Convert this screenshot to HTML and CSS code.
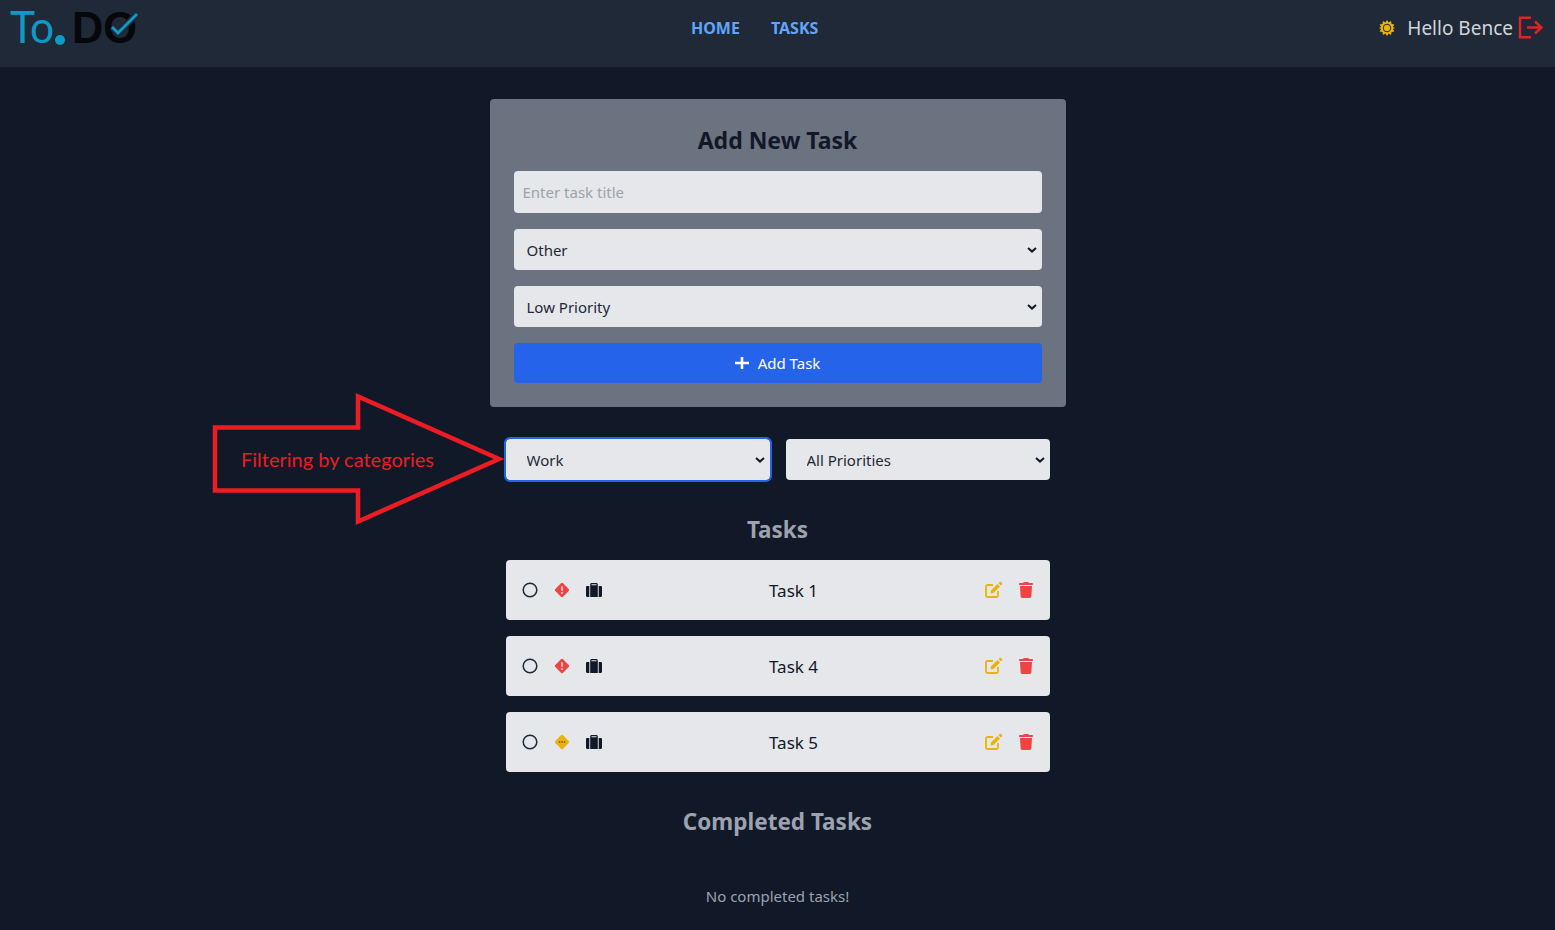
FILE: index.html
```html
<!DOCTYPE html>
<html lang="en">
<head>
    <meta charset="UTF-8">
    <meta name="viewport" content="width=device-width, initial-scale=1.0">
    <title>To.DO</title>
    <link rel="stylesheet" href="styles.css">
</head>
<body>
    <header class="topbar">
        <a class="logo" href="#">
            <svg width="128" height="60" viewBox="0 0 128 60">
                <text class="logo-to" x="0" y="43" textLength="44" lengthAdjust="spacingAndGlyphs">To</text>
                <circle cx="50" cy="40" r="5" fill="#0e9ac7"/>
                <text class="logo-do" x="62" y="43" textLength="65" lengthAdjust="spacingAndGlyphs">DO</text>
                <path d="M102 27l6 6 19-19" fill="none" stroke="#1f2937" stroke-width="6.500"/>
                <path d="M102 27l6 6 19-19" fill="none" stroke="#0e9ac7" stroke-width="3"/>
            </svg>
        </a>
        <nav class="nav">
            <a href="#">HOME</a>
            <a href="#">TASKS</a>
        </nav>
        <div class="user">
            <button class="theme-btn" aria-label="Theme">
                <svg width="16" height="16" viewBox="0 0 16 16" fill="#eab308">
                    <path d="M8 0l1.600 2.600L12 1.100l.6 2.800 2.800.6-1.500 2.400L16 8l-2.100 1.100 1.500 2.400-2.800.6-.6 2.800-2.400-1.500L8 16l-1.600-2.600L4 14.900l-.6-2.800-2.800-.6 1.500-2.400L0 8l2.100-1.100L.6 4.500l2.800-.6L4 1.100l2.400 1.500z"/>
                    <circle cx="8" cy="8" r="3.800" fill="none" stroke="#1f2937" stroke-width="1"/>
                </svg>
            </button>
            <span class="hello">Hello Bence</span>
            <svg class="logout" width="26" height="24" viewBox="0 0 26 24" fill="none" stroke="#dc2626" stroke-width="2.400">
                <path d="M13 1.700H2v19.600h11"/>
                <path d="M9 11.500h15M17 5.500l6.500 6-6.500 6"/>
            </svg>
        </div>
    </header>

    <main class="page">
        <section class="add-card">
            <h2 class="add-title">Add New Task</h2>
            <form class="add-form">
                <input class="field title-input" type="text" placeholder="Enter task title">
                <select class="field pick">
                    <option>Other</option>
                </select>
                <select class="field pick">
                    <option>Low Priority</option>
                </select>
                <button class="add-btn" type="button">
                    <svg width="14" height="16" viewBox="0 0 14 16"><path d="M7 2v12M0 8h14" stroke="#fff" stroke-width="2.600"/></svg>
                    Add Task
                </button>
            </form>
        </section>

        <div class="filters">
            <select class="field filter filter-active">
                <option>Work</option>
            </select>
            <select class="field filter">
                <option>All Priorities</option>
            </select>
        </div>

        <h2 class="section-title">Tasks</h2>
        <ul class="task-list">
            <li class="task">
                <div class="task-icons">
                    <svg class="ico" viewBox="0 0 16 16"><circle cx="8" cy="8" r="6.800" fill="none" stroke="#1f2937" stroke-width="1.500"/></svg>
                    <svg class="ico" viewBox="0 0 16 16"><rect x="2.500" y="2.500" width="11" height="11" rx="1.500" fill="#ef4444" transform="rotate(45 8 8)"/><path d="M8 4.200v4.600" stroke="#e5e7eb" stroke-width="1.500"/><circle cx="8" cy="11" r=".9" fill="#e5e7eb"/></svg>
                    <svg class="ico" viewBox="0 0 16 16"><path d="M3.300 4H1.200C.5 4 0 4.500 0 5.200v8.600C0 14.500.5 15 1.200 15h2.100zM4.200 15h7.600V2.500C11.800 1.700 11.100 1 10.300 1H5.700C4.900 1 4.200 1.700 4.200 2.500zM5.500 2.300h5v1h-5zM12.700 4v11h2.100c.7 0 1.200-.5 1.200-1.200V5.200c0-.7-.5-1.200-1.200-1.200z" fill="#111827" fill-rule="evenodd"/></svg>
                </div>
                <span class="task-name">Task 1</span>
                <div class="task-actions">
                    <svg class="ico edit" viewBox="0 0 18 16"><path d="M9 3H3.500C2.700 3 2 3.700 2 4.500v9c0 .8.700 1.500 1.500 1.500h9c.8 0 1.500-.7 1.500-1.500V9" fill="none" stroke="#eab308" stroke-width="1.800"/><path d="M7 8.500L13.500 2l2.500 2.500L9.500 11 6.500 11.500z" fill="#eab308"/><path d="M14.500 1l1-1c.4-.4 1-.4 1.400 0l1.100 1.100c.4.4.4 1 0 1.400l-1 1z" fill="#eab308"/></svg>
                    <svg class="ico" viewBox="0 0 448 512"><path d="M135.200 17.700L128 32H32C14.300 32 0 46.300 0 64S14.300 96 32 96H416c17.700 0 32-14.300 32-32s-14.300-32-32-32H320l-7.200-14.300C307.400 6.800 296.300 0 284.200 0H163.800c-12.100 0-23.200 6.800-28.600 17.700zM416 128H32L53.200 467c1.600 25.300 22.600 45 47.900 45H346.900c25.300 0 46.300-19.700 47.900-45L416 128z" fill="#ef4444"/></svg>
                </div>
            </li>
            <li class="task">
                <div class="task-icons">
                    <svg class="ico" viewBox="0 0 16 16"><circle cx="8" cy="8" r="6.800" fill="none" stroke="#1f2937" stroke-width="1.500"/></svg>
                    <svg class="ico" viewBox="0 0 16 16"><rect x="2.500" y="2.500" width="11" height="11" rx="1.500" fill="#ef4444" transform="rotate(45 8 8)"/><path d="M8 4.200v4.600" stroke="#e5e7eb" stroke-width="1.500"/><circle cx="8" cy="11" r=".9" fill="#e5e7eb"/></svg>
                    <svg class="ico" viewBox="0 0 16 16"><path d="M3.300 4H1.200C.5 4 0 4.500 0 5.200v8.600C0 14.500.5 15 1.200 15h2.100zM4.200 15h7.600V2.500C11.800 1.700 11.100 1 10.300 1H5.700C4.900 1 4.200 1.700 4.200 2.500zM5.500 2.300h5v1h-5zM12.700 4v11h2.100c.7 0 1.200-.5 1.200-1.200V5.200c0-.7-.5-1.200-1.200-1.200z" fill="#111827" fill-rule="evenodd"/></svg>
                </div>
                <span class="task-name">Task 4</span>
                <div class="task-actions">
                    <svg class="ico edit" viewBox="0 0 18 16"><path d="M9 3H3.500C2.700 3 2 3.700 2 4.500v9c0 .8.700 1.500 1.500 1.500h9c.8 0 1.500-.7 1.500-1.500V9" fill="none" stroke="#eab308" stroke-width="1.800"/><path d="M7 8.500L13.500 2l2.500 2.500L9.500 11 6.500 11.500z" fill="#eab308"/><path d="M14.500 1l1-1c.4-.4 1-.4 1.400 0l1.100 1.100c.4.4.4 1 0 1.400l-1 1z" fill="#eab308"/></svg>
                    <svg class="ico" viewBox="0 0 448 512"><path d="M135.200 17.700L128 32H32C14.300 32 0 46.300 0 64S14.300 96 32 96H416c17.700 0 32-14.300 32-32s-14.300-32-32-32H320l-7.200-14.300C307.400 6.800 296.300 0 284.200 0H163.800c-12.100 0-23.200 6.800-28.600 17.700zM416 128H32L53.200 467c1.600 25.300 22.600 45 47.900 45H346.900c25.300 0 46.300-19.700 47.900-45L416 128z" fill="#ef4444"/></svg>
                </div>
            </li>
            <li class="task">
                <div class="task-icons">
                    <svg class="ico" viewBox="0 0 16 16"><circle cx="8" cy="8" r="6.800" fill="none" stroke="#1f2937" stroke-width="1.500"/></svg>
                    <svg class="ico" viewBox="0 0 16 16"><rect x="2.500" y="2.500" width="11" height="11" rx="1.500" fill="#eab308" transform="rotate(45 8 8)"/><path d="M4.800 8h6.400" stroke="#a16207" stroke-width="2" stroke-dasharray="1.400 1.100"/></svg>
                    <svg class="ico" viewBox="0 0 16 16"><path d="M3.300 4H1.200C.5 4 0 4.500 0 5.200v8.600C0 14.500.5 15 1.200 15h2.100zM4.200 15h7.600V2.500C11.800 1.700 11.100 1 10.300 1H5.700C4.900 1 4.200 1.700 4.200 2.500zM5.500 2.300h5v1h-5zM12.700 4v11h2.100c.7 0 1.200-.5 1.200-1.200V5.200c0-.7-.5-1.200-1.200-1.200z" fill="#111827" fill-rule="evenodd"/></svg>
                </div>
                <span class="task-name">Task 5</span>
                <div class="task-actions">
                    <svg class="ico edit" viewBox="0 0 18 16"><path d="M9 3H3.500C2.700 3 2 3.700 2 4.500v9c0 .8.700 1.500 1.500 1.500h9c.8 0 1.500-.7 1.500-1.500V9" fill="none" stroke="#eab308" stroke-width="1.800"/><path d="M7 8.500L13.500 2l2.500 2.500L9.500 11 6.500 11.500z" fill="#eab308"/><path d="M14.500 1l1-1c.4-.4 1-.4 1.400 0l1.100 1.100c.4.4.4 1 0 1.400l-1 1z" fill="#eab308"/></svg>
                    <svg class="ico" viewBox="0 0 448 512"><path d="M135.200 17.700L128 32H32C14.300 32 0 46.300 0 64S14.300 96 32 96H416c17.700 0 32-14.300 32-32s-14.300-32-32-32H320l-7.200-14.300C307.400 6.800 296.300 0 284.200 0H163.800c-12.100 0-23.200 6.800-28.600 17.700zM416 128H32L53.200 467c1.600 25.300 22.600 45 47.900 45H346.900c25.300 0 46.300-19.700 47.900-45L416 128z" fill="#ef4444"/></svg>
                </div>
            </li>
        </ul>

        <h2 class="section-title completed-title">Completed Tasks</h2>
        <p class="empty">No completed tasks!</p>
    </main>

    <!-- red arrow drawn over the screenshot -->
    <div class="note">
        <svg width="300" height="140" viewBox="0 0 300 140">
            <path d="M3 35.500H146V4.500L287 67 146 129.500V98.500H3Z" fill="none" stroke="#ed1c24" stroke-width="4.500"/>
        </svg>
        <span class="note-text">Filtering by categories</span>
    </div>
</body>
</html>
```

FILE: styles.css
```css
* {
    box-sizing: border-box;
}

body {
    font-family: "Noto Sans", "Open Sans", sans-serif;
    font-size: 15px;
    margin: 0;
    padding: 0;
    background-color: #111827;
    color: #111827;
}

.topbar {
    display: flex;
    justify-content: space-between;
    align-items: center;
    height: 67px;
    padding: 0 11px 12px 10px;
    background-color: #1f2937;
}

.logo {
    display: block;
    align-self: flex-start;
    width: 128px;
    height: 60px;
}

.logo-to {
    font-family: "Lato", sans-serif;
    font-weight: 400;
    font-size: 44px;
    fill: #0e9ac7;
}

.logo-do {
    font-family: "Liberation Sans", sans-serif;
    font-weight: 700;
    font-size: 45px;
    fill: #05070b;
}

.nav {
    display: flex;
    gap: 31px;
}

.nav a {
    color: #60a5fa;
    font-weight: 700;
    font-size: 16px;
    text-decoration: none;
}

.user {
    display: flex;
    align-items: center;
    gap: 4px;
}

.theme-btn {
    display: flex;
    padding: 8px;
    background: none;
    border: none;
}

.hello {
    color: #d1d5db;
    font-size: 19px;
    margin-right: 1px;
}

.page {
    display: flex;
    flex-direction: column;
    align-items: center;
    padding-top: 32px;
}

.add-card {
    width: 576px;
    padding: 24px;
    background-color: #6b7280;
    border-radius: 4px;
}

.add-title {
    margin: 0 0 14px;
    font-size: 23px;
    line-height: 34px;
    font-weight: 700;
    text-align: center;
}

.add-form {
    display: flex;
    flex-direction: column;
    gap: 16px;
}

.field {
    font-family: inherit;
    font-size: 15px;
    color: #1f2937;
    background-color: #e5e7eb;
    border: none;
    border-radius: 4px;
}

.title-input {
    height: 42px;
    padding: 8px 9px;
}

.title-input::placeholder {
    color: #9ca3af;
}

.pick,
.filter {
    appearance: none;
    background-image: url("data:image/svg+xml,%3Csvg xmlns='http://www.w3.org/2000/svg' width='10' height='6'%3E%3Cpath d='M1 1l4 3.600L9 1' fill='none' stroke='%23111827' stroke-width='2'/%3E%3C/svg%3E");
    background-repeat: no-repeat;
    background-position: right 5px center;
}

.pick {
    height: 41px;
    padding: 8px 20px 8px 13px;
}

.add-btn {
    display: flex;
    justify-content: center;
    align-items: center;
    gap: 9px;
    height: 40px;
    font-family: inherit;
    font-size: 15px;
    color: #fff;
    background-color: #2563eb;
    border: none;
    border-radius: 4px;
}

.filters {
    display: flex;
    gap: 16px;
    width: 544px;
    margin-top: 32px;
}

.filter {
    flex: 1;
    height: 41px;
    padding: 8px 20px 8px 21px;
}

.filter-active {
    outline: 2px solid #2563eb;
    outline-offset: 0;
}

.section-title {
    margin: 32px 0 12px;
    font-size: 22.5px;
    line-height: 36px;
    font-weight: 700;
    color: #9ca3af;
}

.task-list {
    display: flex;
    flex-direction: column;
    gap: 16px;
    width: 544px;
    margin: 0;
    padding: 0;
    list-style-type: none;
}

.task {
    display: flex;
    align-items: center;
    height: 60px;
    padding: 0 16px;
    background-color: #e5e7eb;
    border-radius: 4px;
}

.task-icons,
.task-actions {
    display: flex;
    align-items: center;
    gap: 16px;
}

.ico {
    width: 16px;
    height: 16px;
    overflow: visible;
}

.ico.edit {
    width: 18px;
}

.task-name {
    flex: 1;
    padding-left: 2px;
    text-align: center;
    font-size: 17px;
}

.empty {
    margin: 32px 0 0;
    color: #9ca3af;
    line-height: 24px;
}

.note {
    position: absolute;
    left: 212px;
    top: 392px;
}

.note-text {
    position: absolute;
    left: 29px;
    top: 55px;
    font-family: "Lato", sans-serif;
    font-size: 20px;
    color: #ed1c24;
    white-space: nowrap;
}
```
